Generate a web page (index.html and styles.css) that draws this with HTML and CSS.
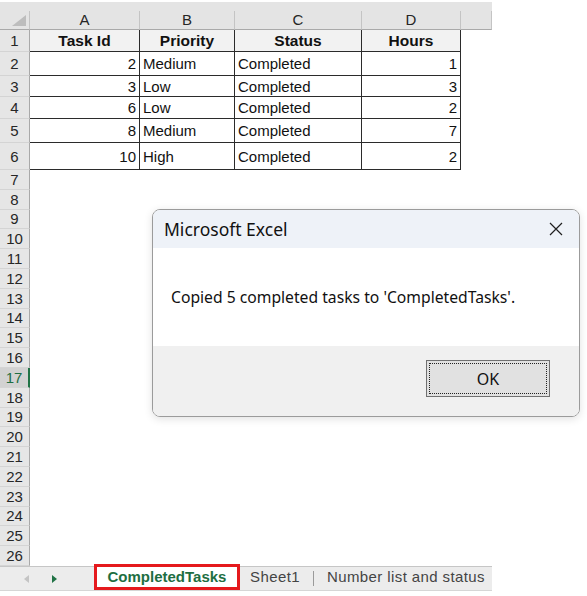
FILE: index.html
```html
<!DOCTYPE html>
<html lang="en">
<head>
    <meta charset="UTF-8">
    <title>CompletedTasks - Excel</title>
    <link rel="stylesheet" href="styles.css">
</head>
<body>
    <div class="workbook">
        <div class="band"></div>

        <div class="sheet">
            <!-- column headers -->
            <div class="corner"><span class="tri"></span></div>
            <div class="ch">A</div>
            <div class="ch">B</div>
            <div class="ch">C</div>
            <div class="ch">D</div>
            <div class="ch"></div>

            <!-- data -->
            <div class="rh">1</div>
            <div class="c hd">Task Id</div>
            <div class="c hd">Priority</div>
            <div class="c hd">Status</div>
            <div class="c hd">Hours</div>
            <div class="e"></div>

            <div class="rh">2</div>
            <div class="c num">2</div>
            <div class="c">Medium</div>
            <div class="c">Completed</div>
            <div class="c num">1</div>
            <div class="e"></div>

            <div class="rh">3</div>
            <div class="c num">3</div>
            <div class="c">Low</div>
            <div class="c">Completed</div>
            <div class="c num">3</div>
            <div class="e"></div>

            <div class="rh">4</div>
            <div class="c num">6</div>
            <div class="c">Low</div>
            <div class="c">Completed</div>
            <div class="c num">2</div>
            <div class="e"></div>

            <div class="rh">5</div>
            <div class="c num">8</div>
            <div class="c">Medium</div>
            <div class="c">Completed</div>
            <div class="c num">7</div>
            <div class="e"></div>

            <div class="rh">6</div>
            <div class="c num">10</div>
            <div class="c">High</div>
            <div class="c">Completed</div>
            <div class="c num">2</div>
            <div class="e"></div>

            <!-- empty rows -->
            <div class="rh">7</div><div class="blank"></div>
            <div class="rh">8</div><div class="blank"></div>
            <div class="rh">9</div><div class="blank"></div>
            <div class="rh">10</div><div class="blank"></div>
            <div class="rh">11</div><div class="blank"></div>
            <div class="rh">12</div><div class="blank"></div>
            <div class="rh">13</div><div class="blank"></div>
            <div class="rh">14</div><div class="blank"></div>
            <div class="rh">15</div><div class="blank"></div>
            <div class="rh">16</div><div class="blank"></div>
            <div class="rh sel">17</div><div class="blank"></div>
            <div class="rh">18</div><div class="blank"></div>
            <div class="rh">19</div><div class="blank"></div>
            <div class="rh">20</div><div class="blank"></div>
            <div class="rh">21</div><div class="blank"></div>
            <div class="rh">22</div><div class="blank"></div>
            <div class="rh">23</div><div class="blank"></div>
            <div class="rh">24</div><div class="blank"></div>
            <div class="rh">25</div><div class="blank"></div>
            <div class="rh">26</div><div class="blank"></div>
        </div>

        <div class="tabs">
            <div class="nav">
                <span class="arrow prev"></span>
                <span class="arrow next"></span>
            </div>
            <div class="tab active">CompletedTasks</div>
            <div class="tab">Sheet1</div>
            <span class="tab-sep"></span>
            <div class="tab">Number list and status</div>
        </div>

        <div class="dialog">
            <div class="dialog-title">
                <span>Microsoft Excel</span>
                <svg class="close" width="14" height="14" viewBox="0 0 14 14">
                    <path d="M1 1 L13 13 M13 1 L1 13" stroke="#1f1f1f" stroke-width="1.2" fill="none"/>
                </svg>
            </div>
            <div class="dialog-body">Copied 5 completed tasks to 'CompletedTasks'.</div>
            <div class="dialog-foot">
                <button class="ok">OK</button>
            </div>
        </div>
    </div>
</body>
</html>
```

FILE: styles.css
```css
body {
    margin: 0;
    background-color: #fff;
    font-family: 'Liberation Sans', Arial, sans-serif;
}

.workbook {
    position: relative;
    width: 587px;
    height: 596px;
    padding-top: 2px;
    box-sizing: border-box;
}

.band {
    width: 492px;
    height: 9px;
    background-color: #e4e4e4;
}

.sheet {
    display: grid;
    width: 492px;
    grid-template-columns: 30px 110px 95px 127px 99px 31px;
    grid-template-rows: 19px 22px 24px 21px 22px 24px 27px repeat(20, 19.8px);
    font-size: 15px;
    color: #111;
}

/* headers */
.corner {
    background-color: #e4e4e4;
    border-right: 1px solid #c4c4c4;
    border-bottom: 1px solid #a9a9a9;
    display: flex;
    justify-content: flex-end;
    align-items: flex-end;
    padding: 0 3px 3px 0;
    box-sizing: border-box;
}

.tri {
    width: 0;
    height: 0;
    border-left: 14px solid transparent;
    border-bottom: 11px solid #bdbdbd;
}

.ch {
    background-color: #e4e4e4;
    border-right: 1px solid #c4c4c4;
    border-bottom: 1px solid #a9a9a9;
    box-sizing: border-box;
    text-align: center;
    line-height: 18px;
    color: #262626;
}

.ch:last-of-type {
    border-right: none;
}

.rh {
    background-color: #e6e6e6;
    border-right: 1px solid #a9a9a9;
    border-bottom: 1px solid #d4d4d4;
    box-sizing: border-box;
    display: flex;
    align-items: center;
    justify-content: center;
    color: #262626;
}

.rh.sel {
    background-color: #d2d2d2;
    color: #1e6e42;
    border-right: 2px solid #217346;
}

/* cells */
.c {
    border-right: 1px solid #2b2b2b;
    border-bottom: 1px solid #2b2b2b;
    box-sizing: border-box;
    display: flex;
    align-items: center;
    padding: 0 3px;
    white-space: nowrap;
}

.c.hd {
    background-color: #f2f2f2;
    font-weight: bold;
    font-size: 15.5px;
    justify-content: center;
}

.c.num {
    justify-content: flex-end;
}

.blank {
    grid-column: span 5;
}

/* sheet tabs */
.tabs {
    width: 492px;
    height: 25px;
    box-sizing: border-box;
    background-color: #ececec;
    border-top: 1px solid #c6c6c6;
    border-bottom: 1px solid #d6d6d6;
    display: flex;
    align-items: flex-start;
    font-size: 15px;
    white-space: nowrap;
}

.nav {
    flex-shrink: 0;
    width: 97px;
    height: 24px;
    display: flex;
    align-items: center;
}

.arrow {
    width: 0;
    height: 0;
    border-top: 4px solid transparent;
    border-bottom: 4px solid transparent;
}

.arrow.prev {
    margin-left: 24px;
    border-right: 5px solid #c4c4c4;
}

.arrow.next {
    margin-left: 23px;
    border-left: 5px solid #217346;
}

.tab {
    flex-shrink: 0;
    height: 20px;
    line-height: 20px;
    padding: 0 13px;
    color: #444;
    letter-spacing: 0.4px;
}

.tab.active {
    width: 140px;
    padding: 0;
    box-sizing: border-box;
    text-align: center;
    background-color: #fff;
    color: #1e6e42;
    font-weight: bold;
    letter-spacing: 0;
    outline: 3px solid #e5191d;
}

.tab-sep {
    flex-shrink: 0;
    width: 1px;
    height: 15px;
    margin-top: 4px;
    background-color: #9a9a9a;
}

/* message box */
.dialog {
    position: absolute;
    left: 152px;
    top: 209px;
    width: 428px;
    height: 208px;
    box-sizing: border-box;
    border: 1px solid #9b9b9b;
    border-radius: 8px;
    overflow: hidden;
    display: flex;
    flex-direction: column;
    font-family: 'Noto Sans', 'Open Sans', sans-serif;
    color: #111;
    box-shadow: 0 2px 8px rgba(0,0,0,0.12);
}

.dialog-title {
    height: 38px;
    background-color: #eef2f8;
    display: flex;
    align-items: center;
    justify-content: space-between;
    padding: 0 16px 0 11px;
    font-size: 17.5px;
}

.dialog-body {
    height: 98px;
    background-color: #fff;
    display: flex;
    align-items: center;
    padding-left: 18px;
    font-size: 15.7px;
}

.dialog-foot {
    flex: 1;
    background-color: #f0f0f0;
    display: flex;
    justify-content: flex-end;
    align-items: flex-start;
    padding: 14px 29px 0 0;
}

.ok {
    position: relative;
    width: 124px;
    height: 37px;
    background-color: #e1e1e1;
    border: 1px solid #707070;
    font-family: 'Noto Sans', 'Open Sans', sans-serif;
    font-size: 16px;
    color: #111;
    padding: 0;
}

.ok::after {
    content: '';
    position: absolute;
    inset: 2px;
    border: 1px dotted #222;
}
```
